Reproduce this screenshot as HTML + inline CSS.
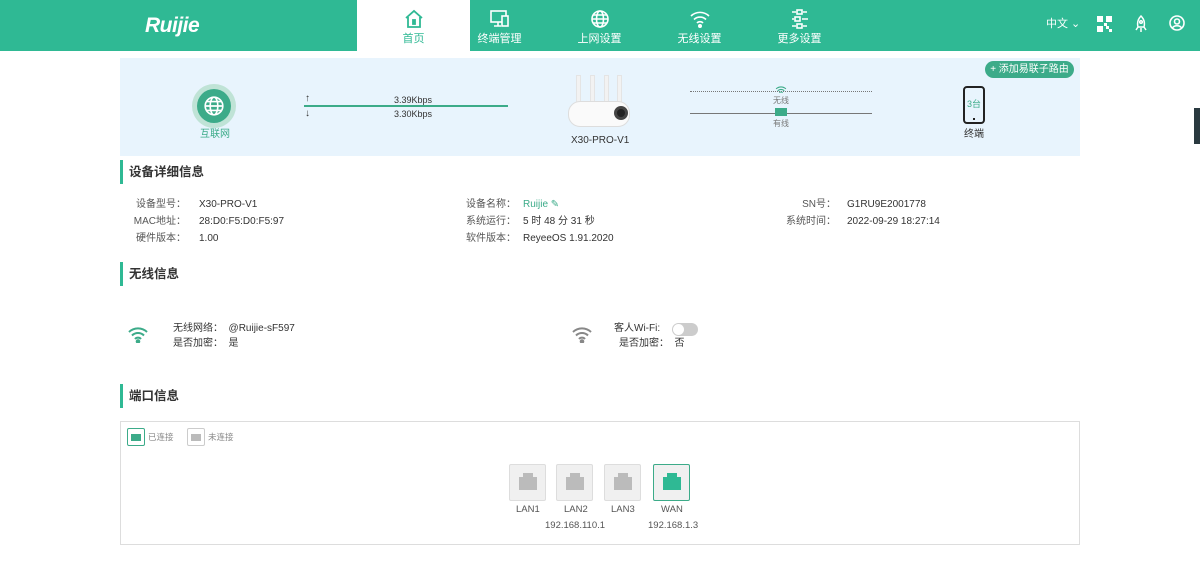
<!DOCTYPE html>
<html><head><meta charset="utf-8"><style>
*{margin:0;padding:0;box-sizing:border-box}
body{width:1200px;height:573px;background:#fff;font-family:"Liberation Sans","Noto Sans CJK SC",sans-serif;font-size:10px;line-height:13px;color:#333;position:relative;overflow:hidden}
.a{position:absolute;white-space:nowrap;line-height:13px}
.hdr{position:absolute;left:0;top:0;width:1200px;height:51px;background:#2fb994}
.nav{position:absolute;top:0;height:51px;width:113px;text-align:center;color:#fff;font-size:11px;line-height:14px}
.nav svg{display:block;margin:9px auto 3px}
.nav.on{background:#fff;color:#2fb994}
.sec{position:absolute;left:120px;height:24px;border-left:3px solid #2fb994;padding-left:6px;font-size:12.5px;font-weight:bold;line-height:24px;color:#333}
.lb{color:#555;text-align:right}
.port{position:absolute;top:464px;width:37px;height:37px;border:1px solid #ddd;background:#f0f0f0;border-radius:2px}
.port i{position:absolute;left:9px;top:12px;width:18px;height:13px;background:#bbb}
.port i:before{content:"";position:absolute;left:4px;top:-4px;width:10px;height:4px;background:inherit}
</style></head><body>
<div class="hdr"></div>
<div class="a" style="left:145px;top:15px;color:#fff;font-size:21px;line-height:22px;font-style:italic;font-weight:bold;letter-spacing:-0.5px;font-family:'Liberation Sans',sans-serif">Ruijie</div>
<div class="nav on" style="left:357px"><svg width="20" height="20" viewBox="0 0 20 20" fill="none" stroke="#2fb994" stroke-width="1.8"><path d="M2 9L10 2l8 7M4 8v10h12V8"/><rect x="9" y="11" width="2" height="4" fill="#2fb994"/></svg>首页</div>
<div class="nav" style="left:443px"><svg width="22" height="20" viewBox="0 0 22 20" fill="none" stroke="#fff" stroke-width="1.6"><rect x="2" y="2" width="15" height="11"/><path d="M9 13v4M5 17h7"/><rect x="13" y="7" width="6" height="10" fill="#2fb994"/></svg>终端管理</div>
<div class="nav" style="left:543px"><svg width="20" height="20" viewBox="0 0 20 20" fill="none" stroke="#fff" stroke-width="1.6"><circle cx="10" cy="10" r="8"/><ellipse cx="10" cy="10" rx="3.5" ry="8"/><path d="M2 10h16M3.5 6h13M3.5 14h13"/></svg>上网设置</div>
<div class="nav" style="left:643px"><svg width="22" height="20" viewBox="0 0 22 20" fill="none" stroke="#fff" stroke-width="1.6"><path d="M2 7a13 13 0 0 1 18 0M5 10.5a8.5 8.5 0 0 1 12 0M8 14a4 4 0 0 1 6 0"/><circle cx="11" cy="17" r="1.2" fill="#fff"/></svg>无线设置</div>
<div class="nav" style="left:743px"><svg width="22" height="20" viewBox="0 0 22 20" fill="none" stroke="#fff" stroke-width="1.6"><path d="M3 3h4M14 3h4M3 10h2M13 10h6M3 17h4M14 17h4"/><rect x="8" y="1" width="5" height="4"/><rect x="6" y="8" width="5" height="4"/><rect x="8" y="15" width="5" height="4"/></svg>更多设置</div>
<div class="a" style="left:1046px;top:18px;color:#fff;font-size:11px">中文 ⌄</div>
<svg class="a" style="left:1097px;top:16px" width="15" height="16" viewBox="0 0 15 16" fill="#fff"><rect x="0" y="0" width="6" height="6"/><rect x="9" y="0" width="6" height="6"/><rect x="0" y="10" width="6" height="6"/><rect x="9" y="10" width="3" height="3"/><rect x="12" y="13" width="3" height="3"/><rect x="7" y="7" width="3" height="3"/></svg>
<svg class="a" style="left:1134px;top:15px" width="14" height="18" viewBox="0 0 14 18" fill="none" stroke="#fff" stroke-width="1.5"><path d="M7 1C4 4 3 8 4 12h6c1-4 0-8-3-11zM4 12l-2 3M10 12l2 3M7 13v4"/><circle cx="7" cy="7" r="1.3"/></svg>
<svg class="a" style="left:1169px;top:15px" width="16" height="16" viewBox="0 0 16 16" fill="none" stroke="#fff" stroke-width="1.6"><circle cx="8" cy="8" r="7"/><circle cx="8" cy="6.5" r="2.5"/><path d="M3.5 13c1.5-3 7.5-3 9 0"/></svg>

<div class="a" style="left:120px;top:58px;width:960px;height:98px;background:#e8f4fd"></div>
<div class="a" style="left:192px;top:84px;width:44px;height:44px;border-radius:50%;background:#bfe3d6"></div>
<div class="a" style="left:197px;top:89px;width:34px;height:34px;border-radius:50%;background:#3cab89"></div>
<svg class="a" style="left:203px;top:95px" width="22" height="22" viewBox="0 0 20 20" fill="none" stroke="#fff" stroke-width="1.5"><circle cx="10" cy="10" r="8"/><ellipse cx="10" cy="10" rx="3.5" ry="8"/><path d="M2 10h16M3.5 6h13M3.5 14h13"/></svg>
<div class="a" style="left:200px;top:128px;color:#3cab89;font-size:10px">互联网</div>
<div class="a" style="left:305px;top:92px;font-size:10px">↑</div>
<div class="a" style="left:305px;top:107px;font-size:10px">↓</div>
<div class="a" style="left:304px;top:105px;width:204px;height:2px;background:#3cab89"></div>
<div class="a" style="left:394px;top:94px;font-size:9px">3.39Kbps</div>
<div class="a" style="left:394px;top:108px;font-size:9px">3.30Kbps</div>
<div class="a" style="left:576px;top:75px;width:5px;height:30px;background:#f2f2f2;border:1px solid #e4e4e4"></div>
<div class="a" style="left:590px;top:75px;width:5px;height:30px;background:#f2f2f2;border:1px solid #e4e4e4"></div>
<div class="a" style="left:604px;top:75px;width:5px;height:30px;background:#f2f2f2;border:1px solid #e4e4e4"></div>
<div class="a" style="left:617px;top:75px;width:5px;height:30px;background:#f2f2f2;border:1px solid #e4e4e4"></div>
<div class="a" style="left:568px;top:101px;width:62px;height:26px;background:#fafafa;border:1px solid #ddd;border-radius:12px"></div>
<div class="a" style="left:614px;top:106px;width:14px;height:14px;background:#222;border-radius:50%;border:3px solid #444"></div>
<div class="a" style="left:571px;top:134px;font-size:10px">X30-PRO-V1</div>
<div class="a" style="left:690px;top:91px;width:182px;border-top:1px dotted #777"></div>
<div class="a" style="left:690px;top:113px;width:182px;height:1px;background:#777"></div>
<svg class="a" style="left:775px;top:85px" width="12" height="10" viewBox="0 0 22 18" fill="none" stroke="#3cab89" stroke-width="2"><path d="M2 7a13 13 0 0 1 18 0M5 10.5a8.5 8.5 0 0 1 12 0M8 14a4 4 0 0 1 6 0"/></svg>
<div class="a" style="left:773px;top:94px;font-size:8px;color:#777">无线</div>
<div class="a" style="left:775px;top:108px;width:12px;height:8px;background:#3cab89"></div>
<div class="a" style="left:773px;top:117px;font-size:8px;color:#777">有线</div>
<div class="a" style="left:985px;top:61px;width:89px;height:17px;border-radius:9px;background:#3cab89;color:#fff;font-size:10px;line-height:17px;text-align:center">+ 添加易联子路由</div>
<div class="a" style="left:963px;top:86px;width:22px;height:38px;border:2px solid #222;border-radius:4px;font-size:9px;color:#3cab89;text-align:center;padding-top:10px">3台</div>
<div class="a" style="left:973px;top:118px;width:2px;height:2px;background:#222"></div>
<div class="a" style="left:964px;top:128px;font-size:10px">终端</div>
<div class="a" style="left:1194px;top:108px;width:6px;height:36px;background:#2a3a40"></div>

<div class="sec" style="top:160px">设备详细信息</div>
<div class="a lb" style="left:120px;width:66px;top:198px">设备型号：</div>
<div class="a lb" style="left:120px;width:66px;top:215px">MAC地址：</div>
<div class="a lb" style="left:120px;width:66px;top:232px">硬件版本：</div>
<div class="a" style="left:199px;top:198px">X30-PRO-V1</div>
<div class="a" style="left:199px;top:215px">28:D0:F5:D0:F5:97</div>
<div class="a" style="left:199px;top:232px">1.00</div>
<div class="a lb" style="left:450px;width:66px;top:198px">设备名称：</div>
<div class="a lb" style="left:450px;width:66px;top:215px">系统运行：</div>
<div class="a lb" style="left:450px;width:66px;top:232px">软件版本：</div>
<div class="a" style="left:523px;top:198px;color:#3cab89">Ruijie ✎</div>
<div class="a" style="left:523px;top:215px">5 时 48 分 31 秒</div>
<div class="a" style="left:523px;top:232px">ReyeeOS 1.91.2020</div>
<div class="a lb" style="left:770px;width:66px;top:198px">SN号：</div>
<div class="a lb" style="left:770px;width:66px;top:215px">系统时间：</div>
<div class="a" style="left:847px;top:198px">G1RU9E2001778</div>
<div class="a" style="left:847px;top:215px">2022-09-29 18:27:14</div>

<div class="sec" style="top:262px">无线信息</div>
<svg class="a" style="left:127px;top:325px" width="22" height="18" viewBox="0 0 22 18" fill="none" stroke="#3cab89" stroke-width="2"><path d="M2 7a13 13 0 0 1 18 0M5 10.5a8.5 8.5 0 0 1 12 0M8 14a4 4 0 0 1 6 0"/><circle cx="11" cy="16.5" r="1.3" fill="#3cab89"/></svg>
<div class="a" style="left:173px;top:322px">无线网络：&nbsp;&nbsp;@Ruijie-sF597</div>
<div class="a" style="left:173px;top:337px">是否加密：&nbsp;&nbsp;是</div>
<svg class="a" style="left:571px;top:325px" width="22" height="18" viewBox="0 0 22 18" fill="none" stroke="#888" stroke-width="2"><path d="M2 7a13 13 0 0 1 18 0M5 10.5a8.5 8.5 0 0 1 12 0M8 14a4 4 0 0 1 6 0"/><circle cx="11" cy="16.5" r="1.3" fill="#888"/></svg>
<div class="a" style="left:614px;top:322px">客人Wi-Fi:</div>
<div class="a" style="left:672px;top:323px;width:26px;height:13px;border-radius:7px;background:#ccc"></div>
<div class="a" style="left:673px;top:324px;width:11px;height:11px;border-radius:50%;background:#fff"></div>
<div class="a" style="left:619px;top:337px">是否加密：&nbsp;&nbsp;否</div>

<div class="sec" style="top:384px">端口信息</div>
<div class="a" style="left:120px;top:421px;width:960px;height:124px;border:1px solid #ddd"></div>
<div class="a" style="left:127px;top:428px;width:18px;height:18px;border:1px solid #3cab89;border-radius:2px"></div>
<div class="a" style="left:131px;top:434px;width:10px;height:7px;background:#3cab89"></div>
<div class="a" style="left:148px;top:431px;font-size:8.5px;color:#888">已连接</div>
<div class="a" style="left:187px;top:428px;width:18px;height:18px;border:1px solid #ccc;border-radius:2px"></div>
<div class="a" style="left:191px;top:434px;width:10px;height:7px;background:#bbb"></div>
<div class="a" style="left:208px;top:431px;font-size:8.5px;color:#888">未连接</div>
<div class="port" style="left:509px"><i></i></div>
<div class="port" style="left:556px"><i></i></div>
<div class="port" style="left:604px"><i></i></div>
<div class="port" style="left:653px;border-color:#3cab89"><i style="background:#2fb994"></i></div>
<div class="a" style="left:516px;top:503px;font-size:9.5px;color:#555">LAN1</div>
<div class="a" style="left:564px;top:503px;font-size:9.5px;color:#555">LAN2</div>
<div class="a" style="left:611px;top:503px;font-size:9.5px;color:#555">LAN3</div>
<div class="a" style="left:661px;top:503px;font-size:9.5px;color:#555">WAN</div>
<div class="a" style="left:545px;top:519px;font-size:9.5px;color:#555">192.168.110.1</div>
<div class="a" style="left:648px;top:519px;font-size:9.5px;color:#555">192.168.1.3</div>
</body></html>
